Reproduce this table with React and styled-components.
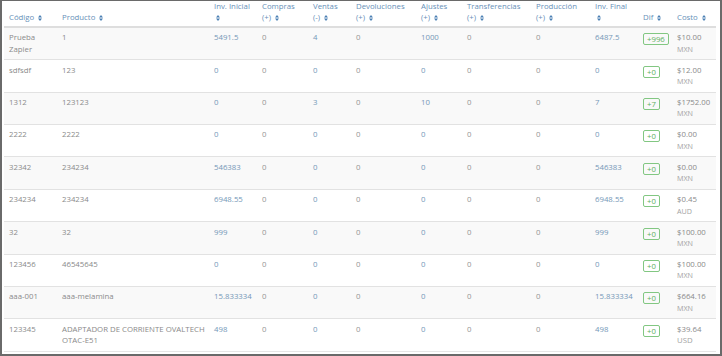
import React from "react";
import styled, { createGlobalStyle } from "styled-components";

const Global = createGlobalStyle`
  html, body { margin: 0; padding: 0; background: #fff; }
  body { font-family: "Open Sans", "Liberation Sans", sans-serif; }
`;

const Frame = styled.div`
  width: 722px;
  height: 356px;
  box-sizing: border-box;
  border: 2px solid #6a6a6a;
  border-top-width: 1px;
  padding: 0 4px 0 2px;
  overflow: hidden;
  background: #fff;
`;

const Table = styled.table`
  width: 712px;
  table-layout: fixed;
  border-collapse: collapse;
  border-spacing: 0;
  font-size: 7.8px;
  line-height: 11.4px;
`;

const HeadCell = styled.th`
  text-align: left;
  font-weight: 400;
  color: #6790b8;
  vertical-align: bottom;
  padding: 0 5px 2px;
  border-bottom: 2px solid #dedede;
  white-space: nowrap;
`;

const Row = styled.tr`
  background: ${(p) => (p.$striped ? "#f9f9f9" : "#ffffff")};
  border-top: 1px solid #e2e2e2;
  &:last-child { border-bottom: 1px solid #e6e6e6; }
`;

const Cell = styled.td`
  vertical-align: top;
  padding: 4.3px 5px;
  color: ${(p) => (p.$link ? "#7598b8" : "#959595")};
  overflow: hidden;
`;

const TextCell = styled(Cell)`
  color: #8a8a8a;
  padding-right: 2px;
`;

const Badge = styled.span`
  display: inline-block;
  border: 1px solid #82c782;
  color: #62b062;
  border-radius: 2px;
  padding: 0 3px;
  line-height: 10px;
  margin-top: 1px;
`;

const Price = styled.div`
  color: #8a8a8a;
`;

const Currency = styled.div`
  color: #a3a3a3;
  font-size: ${(p) => (p.$big ? "7.8px" : "7.2px")};
`;

const SortSvg = styled.svg`
  width: 4px;
  height: 6px;
  margin-left: 2px;
  vertical-align: -0.5px;
`;

const SortIcon = () => (
  <SortSvg viewBox="0 0 4 6">
    <path d="M2 0 L4 2.5 H0 Z M0 3.5 H4 L2 6 Z" fill="#4a7fb3" />
  </SortSvg>
);

const cols = [53, 152, 48, 51, 43, 65, 46, 69, 59, 48, 34, 44];

const headers = [
  ["", "Código"],
  ["", "Producto"],
  ["Inv. Inicial", ""],
  ["Compras", "(+)"],
  ["Ventas", "(-)"],
  ["Devoluciones", "(+)"],
  ["Ajustes", "(+)"],
  ["Transferencias", "(+)"],
  ["Producción", "(+)"],
  ["Inv. Final", ""],
  ["", "Dif"],
  ["", "Costo"],
];

const rows = [
  ["Prueba Zapier", "1", "5491.5", "0", "4", "0", "1000", "0", "0", "6487.5", "+996", "$10.00", "MXN"],
  ["sdfsdf", "123", "0", "0", "0", "0", "0", "0", "0", "0", "+0", "$12.00", "MXN"],
  ["1312", "123123", "0", "0", "3", "0", "10", "0", "0", "7", "+7", "$1752.00", "MXN"],
  ["2222", "2222", "0", "0", "0", "0", "0", "0", "0", "0", "+0", "$0.00", "MXN"],
  ["32342", "234234", "546383", "0", "0", "0", "0", "0", "0", "546383", "+0", "$0.00", "MXN"],
  ["234234", "234234", "6948.55", "0", "0", "0", "0", "0", "0", "6948.55", "+0", "$0.45", "AUD"],
  ["32", "32", "999", "0", "0", "0", "0", "0", "0", "999", "+0", "$100.00", "MXN"],
  ["123456", "46545645", "0", "0", "0", "0", "0", "0", "0", "0", "+0", "$100.00", "MXN"],
  ["aaa-001", "aaa-melamina", "15.833334", "0", "0", "0", "0", "0", "0", "15.833334", "+0", "$664.16", "MXN"],
  ["123345", "ADAPTADOR DE CORRIENTE OVALTECH OTAC-E51", "498", "0", "0", "0", "0", "0", "0", "498", "+0", "$39.64", "USD"],
];

const linkCols = new Set([2, 4, 6, 9]);

export default function App() {
  return (
    <>
      <Global />
      <Frame>
        <Table>
          <colgroup>
            {cols.map((w, i) => (
              <col key={i} style={{ width: w }} />
            ))}
          </colgroup>
          <thead>
            <tr>
              {headers.map(([l1, l2], i) => (
                <HeadCell key={i}>
                  {l1 ? <div>{l1}</div> : null}
                  <div>
                    {l2}
                    {l2 ? " " : ""}
                    <SortIcon />
                  </div>
                </HeadCell>
              ))}
            </tr>
          </thead>
          <tbody>
            {rows.map((r, ri) => (
              <Row key={ri} $striped={ri % 2 === 0}>
                <TextCell>{r[0]}</TextCell>
                <TextCell>{r[1]}</TextCell>
                {r.slice(2, 10).map((v, ci) => (
                  <Cell key={ci} $link={linkCols.has(ci + 2)}>
                    {v}
                  </Cell>
                ))}
                <Cell>
                  <Badge>{r[10]}</Badge>
                </Cell>
                <Cell>
                  <Price>{r[11]}</Price>
                  <Currency $big={r[12] === "USD"}>{r[12]}</Currency>
                </Cell>
              </Row>
            ))}
          </tbody>
        </Table>
      </Frame>
    </>
  );
}
